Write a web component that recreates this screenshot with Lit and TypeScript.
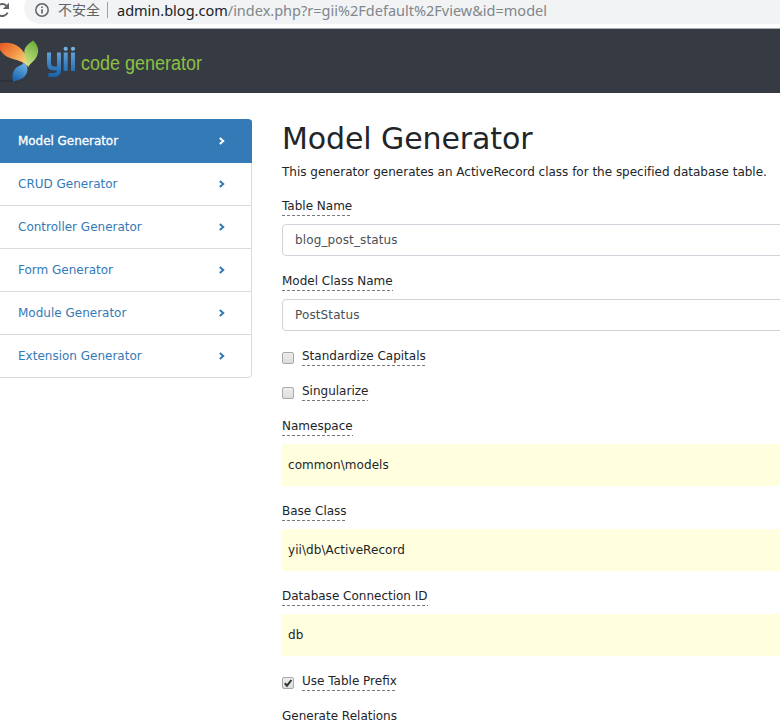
import { LitElement, html, svg, css } from "lit";
import { customElement } from "lit/decorators.js";
import { classMap } from "lit/directives/class-map.js";

@customElement("browser-bar")
class BrowserBar extends LitElement {
  static styles = css`
    :host { display: block; height: 28px; background: #fff; overflow: hidden; }
    .row { display: flex; height: 24px; }
    .reload { width: 24px; flex: none; }
    .omnibox { flex: 1; display: flex; align-items: center; height: 32px; margin-top: -8px; padding: 6px 0 2px; box-sizing: border-box; background: #f1f3f4; border-radius: 17px 0 0 17px; white-space: nowrap; overflow: hidden; }
    .info { flex: none; margin-left: 11px; }
    .warn { font: 14px/20px "Noto Sans CJK SC", sans-serif; color: #5f6368; margin: -2px 0 0 9px; width: 44px; }
    .sep { width: 1px; height: 16px; background: #9aa0a6; margin: 0 9px 0 5px; }
    .url { font: 14.5px/20px "Noto Sans", sans-serif; color: #80868b; }
    .host { color: #202124; }
  `;
  render() {
    return html`<div class="row">
      <svg class="reload" width="24" height="24" viewBox="0 0 24 24">
        <path d="M6.4 5.8A6 6 0 1 0 7.6 12.6" fill="none" stroke="#5f6368" stroke-width="2" />
        <path d="M9 2.8V9H2.8z" fill="#5f6368" />
      </svg>
      <div class="omnibox">
        <svg class="info" width="14" height="14" viewBox="0 0 14 14">
          <circle cx="7" cy="7" r="6.2" fill="none" stroke="#5f6368" stroke-width="1.5" />
          <path d="M7 6.2v4.3M7 3.5v1.6" stroke="#5f6368" stroke-width="1.6" />
        </svg>
        <span class="warn">不安全</span><span class="sep"></span>
        <span class="url"><span class="host">admin.blog.com</span>/index.php?r=gii%2Fdefault%2Fview&amp;id=model</span>
      </div>
    </div>`;
  }
}

@customElement("gii-header")
class GiiHeader extends LitElement {
  static styles = css`
    :host { display: block; height: 65px; box-sizing: border-box; border-top: 1px solid #aaaeb1; background: #363b43; }
    svg { display: block; }
    .word { font: 20px "Liberation Sans", Arial, sans-serif; fill: #8bc043; }
  `;
  render() {
    return html`<svg width="240" height="64" viewBox="0 29 240 64">
      <defs>
        <linearGradient id="red" x1="0" y1="0" x2="1" y2="0.8"><stop offset="0" stop-color="#e2501f" /><stop offset=".55" stop-color="#f39144" /><stop offset="1" stop-color="#fbd57c" /></linearGradient>
        <linearGradient id="green" x1=".7" y1="0" x2=".3" y2="1"><stop offset="0" stop-color="#66ad35" /><stop offset="1" stop-color="#d3e58b" /></linearGradient>
        <linearGradient id="blue" x1=".8" y1="0" x2=".3" y2="1"><stop offset="0" stop-color="#70b0e0" /><stop offset="1" stop-color="#1765b0" /></linearGradient>
        <linearGradient id="name" gradientUnits="userSpaceOnUse" x1="0" y1="47" x2="0" y2="77"><stop offset="0" stop-color="#75afe0" /><stop offset=".55" stop-color="#3d83c5" /><stop offset="1" stop-color="#1762ac" /></linearGradient>
      </defs>
      <ellipse cx="9" cy="81" rx="10" ry="1" fill="#262a30" opacity=".5" />
      <path d="M-3 44C4 42 13 42 19 47C25 52 28 58 27 66C23 61 16 60 10 58C4 56-1 50-3 44z" fill="url(#red)" />
      <path d="M33 40.5C38 45 39.5 51 37 56C35 61 30 63 28 67.5C26 61 23.5 56 24.5 50C26 45 30 43 33 40.5z" fill="url(#green)" />
      <path d="M24 62.5C28.5 66 28.5 72 25 76C22 79.500 17 80 13.500 82C12 77 12 73 15 69C18 65.500 22 65.500 24 62.500z" fill="url(#blue)" />
      ${svg`<g fill="none" stroke="url(#name)" stroke-width="4" stroke-linejoin="round">
        <path d="M49 52.500V63.500Q49 68.500 54 68.500H58.500M59 52.500V70Q59 75 54 75H48.500" />
        <path d="M65.700 52.500V71M73 52.500V71" />
      </g>`}
      <circle cx="65.700" cy="48.800" r="2.100" fill="#75b0e0" /><circle cx="73" cy="48.800" r="2.100" fill="#75b0e0" />
      <text class="word" x="81" y="70" textLength="121" lengthAdjust="spacingAndGlyphs">code generator</text>
    </svg>`;
  }
}

@customElement("gii-menu")
class GiiMenu extends LitElement {
  static styles = css`
    :host { display: block; width: 252px; flex: none; }
    .list { border-radius: 0 4px 4px 0; overflow: hidden; }
    .item { display: flex; align-items: center; justify-content: space-between; box-sizing: border-box; height: 43px; padding: 0 26px 1px 18px; color: #337ab7; border: solid #d9dadb; border-width: 0 1px 1px 0; font: 12px/18px "DejaVu Sans", Verdana, sans-serif; }
    .item:last-child { border-radius: 0 0 4px 0; }
    .active { height: 44px; background: #337ab7; color: #fff; border-color: #337ab7; padding-bottom: 0; -webkit-text-stroke: .3px #fff; letter-spacing: -.05px; }
  `;
  items = ["Model", "CRUD", "Controller", "Form", "Module", "Extension"];
  render() {
    return html`<nav class="list">
      ${this.items.map((name, i) => html`<div class=${classMap({ item: true, active: i === 0 })}>
        <span>${name} Generator</span>
        <svg width="7" height="8" viewBox="0 0 7 8"><path d="M1.8 1L5.2 4L1.8 7" fill="none" stroke="currentColor" stroke-width="2" /></svg>
      </div>`)}
    </nav>`;
  }
}

type Field = { label: string; kind: "input" | "sticky" | "check" | "label"; value?: string; on?: boolean };

@customElement("gii-form")
class GiiForm extends LitElement {
  static styles = css`
    :host { display: block; width: 700px; flex: none; color: #212529; font: 12px/18px "DejaVu Sans", Verdana, sans-serif; }
    h1 { margin: 0; font-size: 30px; line-height: 38px; font-weight: 400; letter-spacing: -.1px; }
    p { margin: 5px 0 15px; white-space: nowrap; letter-spacing: -.01px; }
    .field { margin-bottom: 15px; }
    .label { display: block; width: max-content; height: 20px; box-sizing: border-box; line-height: 21px; background: repeating-linear-gradient(90deg, #777b80 0 3px, transparent 3px 5px) left bottom / 100% 1px no-repeat; }
    .plain { background: none; }
    .box { margin-top: 8px; box-sizing: border-box; }
    .input { height: 32px; line-height: 31px; padding-left: 12px; border: 1px solid #ced4da; border-radius: 4px; color: #495057; letter-spacing: .12px; }
    .sticky { height: 42px; line-height: 42px; padding-left: 6px; background: #ffffe0; letter-spacing: .07px; }
    .check { display: flex; gap: 8px; }
    .check svg { margin-top: 6px; }
  `;
  fields: Field[] = [
    { label: "Table Name", kind: "input", value: "blog_post_status" },
    { label: "Model Class Name", kind: "input", value: "PostStatus" },
    { label: "Standardize Capitals", kind: "check" },
    { label: "Singularize", kind: "check" },
    { label: "Namespace", kind: "sticky", value: "common\\models" },
    { label: "Base Class", kind: "sticky", value: "yii\\db\\ActiveRecord" },
    { label: "Database Connection ID", kind: "sticky", value: "db" },
    { label: "Use Table Prefix", kind: "check", on: true },
    { label: "Generate Relations", kind: "label" },
  ];
  field(f: Field) {
    if (f.kind === "check")
      return html`<div class="field check">
        <svg width="12" height="12" viewBox="0 0 12 12">
          <defs><linearGradient id="g" x2="0" y2="1"><stop stop-color="#eee" /><stop offset="1" stop-color="#dcdcdc" /></linearGradient></defs>
          <rect x=".5" y=".5" width="11" height="11" rx="1.5" fill="url(#g)" stroke="#a9a9a9" />
          ${f.on ? svg`<path d="M2.8 6.2L5 8.6L9.4 3" fill="none" stroke="#333" stroke-width="2" />` : ""}
        </svg>
        <span class="label">${f.label}</span>
      </div>`;
    return html`<div class="field">
      <span class=${classMap({ label: true, plain: f.kind === "label" })}>${f.label}</span>
      ${f.value ? html`<div class="box ${f.kind}">${f.value}</div>` : ""}
    </div>`;
  }
  render() {
    return html`<h1>Model Generator</h1>
      <p>This generator generates an ActiveRecord class for the specified database table.</p>
      ${this.fields.map((f) => this.field(f))}`;
  }
}

@customElement("app-root")
class AppRoot extends LitElement {
  static styles = css`
    :host { display: block; width: 100%; height: 722px; overflow: hidden; background: #fff; }
    .page { display: flex; gap: 30px; padding-top: 26px; align-items: flex-start; }
    gii-form { margin-top: 1px; }
  `;
  render() {
    return html`<browser-bar></browser-bar><gii-header></gii-header>
      <main class="page"><gii-menu></gii-menu><gii-form></gii-form></main>`;
  }
}
